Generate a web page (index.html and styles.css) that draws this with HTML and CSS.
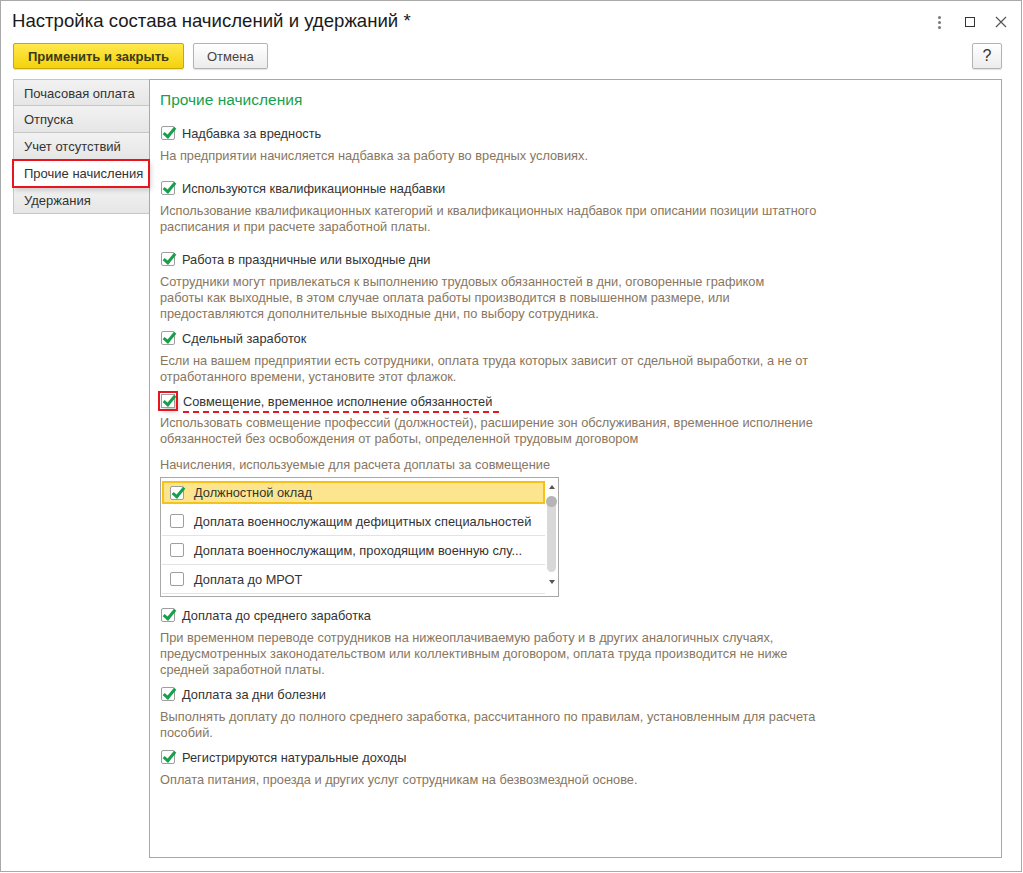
FILE: index.html
```html
<!DOCTYPE html>
<html lang="ru">
<head>
    <meta charset="UTF-8">
    <title>Настройка состава начислений и удержаний</title>
    <link rel="stylesheet" href="styles.css">
</head>
<body>
    <div class="window">
        <div class="titlebar">
            <h1>Настройка состава начислений и удержаний *</h1>
            <div class="win-controls">
                <span class="dots"><i></i><i></i><i></i></span>
                <span class="maximize"></span>
                <svg class="close" width="12" height="12" viewBox="0 0 12 12"><path d="M1 1 L11 11 M11 1 L1 11" stroke="#555" stroke-width="1.2"/></svg>
            </div>
        </div>

        <div class="commandbar">
            <button class="btn btn-primary">Применить и закрыть</button>
            <button class="btn">Отмена</button>
            <button class="btn btn-help">?</button>
        </div>

        <div class="main">
            <div class="tabs">
                <div class="tab">Почасовая оплата</div>
                <div class="tab">Отпуска</div>
                <div class="tab">Учет отсутствий</div>
                <div class="tab active">Прочие начисления</div>
                <div class="tab">Удержания</div>
            </div>

            <div class="panel">
                <h2>Прочие начисления</h2>

                <div class="opt first">
                    <label class="check"><span class="cb on"></span>Надбавка за вредность</label>
                    <p class="hint">На предприятии начисляется надбавка за работу во вредных условиях.</p>
                </div>

                <div class="opt spaced">
                    <label class="check"><span class="cb on"></span>Используются квалификационные надбавки</label>
                    <p class="hint">Использование квалификационных категорий и квалификационных надбавок при описании позиции штатного<br>расписания и при расчете заработной платы.</p>
                </div>

                <div class="opt spaced">
                    <label class="check"><span class="cb on"></span>Работа в праздничные или выходные дни</label>
                    <p class="hint">Сотрудники могут привлекаться к выполнению трудовых обязанностей в дни, оговоренные графиком<br>работы как выходные, в этом случае оплата работы производится в повышенном размере, или<br>предоставляются дополнительные выходные дни, по выбору сотрудника.</p>
                </div>

                <div class="opt">
                    <label class="check"><span class="cb on"></span>Сдельный заработок</label>
                    <p class="hint">Если на вашем предприятии есть сотрудники, оплата труда которых зависит от сдельной выработки, а не от<br>отработанного времени, установите этот флажок.</p>
                </div>

                <div class="opt">
                    <label class="check"><span class="cb on marked"></span><span class="underlined">Совмещение, временное исполнение обязанностей</span></label>
                    <p class="hint tight">Использовать совмещение профессий (должностей), расширение зон обслуживания, временное исполнение<br>обязанностей без освобождения от работы, определенной трудовым договором</p>
                    <p class="hint list-title">Начисления, используемые для расчета доплаты за совмещение</p>
                    <div class="listbox">
                        <div class="rows">
                            <div class="row selected"><span class="cb on"></span>Должностной оклад</div>
                            <div class="row"><span class="cb"></span>Доплата военнослужащим дефицитных специальностей</div>
                            <div class="row"><span class="cb"></span>Доплата военнослужащим, проходящим военную слу...</div>
                            <div class="row"><span class="cb"></span>Доплата до МРОТ</div>
                        </div>
                        <div class="scrollbar">
                            <span class="arrow up"></span>
                            <span class="track"><span class="thumb"></span></span>
                            <span class="arrow down"></span>
                        </div>
                    </div>
                </div>

                <div class="opt after-list">
                    <label class="check"><span class="cb on"></span>Доплата до среднего заработка</label>
                    <p class="hint">При временном переводе сотрудников на нижеоплачиваемую работу и в других аналогичных случаях,<br>предусмотренных законодательством или коллективным договором, оплата труда производится не ниже<br>средней заработной платы.</p>
                </div>

                <div class="opt">
                    <label class="check"><span class="cb on"></span>Доплата за дни болезни</label>
                    <p class="hint">Выполнять доплату до полного среднего заработка, рассчитанного по правилам, установленным для расчета<br>пособий.</p>
                </div>

                <div class="opt">
                    <label class="check"><span class="cb on"></span>Регистрируются натуральные доходы</label>
                    <p class="hint">Оплата питания, проезда и других услуг сотрудникам на безвозмездной основе.</p>
                </div>
            </div>
        </div>
    </div>
</body>
</html>
```

FILE: styles.css
```css
body {
    margin: 0;
    background-color: #ffffff;
    font-family: 'Liberation Sans', Arial, sans-serif;
    color: #333333;
}

.window {
    width: 1022px;
    height: 872px;
    box-sizing: border-box;
    border: 1px solid #a9a9a9;
    display: flex;
    flex-direction: column;
}

.titlebar {
    height: 42px;
    display: flex;
    align-items: center;
    justify-content: space-between;
    padding: 0 14px 0 11px;
}

h1 {
    margin: 0;
    font-size: 18.6px;
    font-weight: normal;
    color: #1a1a1a;
    position: relative;
    top: -1px;
}

.win-controls {
    display: flex;
    align-items: center;
}

.dots {
    display: flex;
    flex-direction: column;
    gap: 2px;
    margin-right: 24px;
}

.dots i {
    width: 3px;
    height: 3px;
    border-radius: 50%;
    background-color: #777;
}

.maximize {
    width: 8px;
    height: 8px;
    border: 1px solid #333;
    margin-right: 20px;
}

.commandbar {
    display: flex;
    gap: 9px;
    padding: 0 19px 0 12px;
    height: 26px;
}

.btn {
    font-family: 'Liberation Sans', Arial, sans-serif;
    font-size: 13px;
    height: 26px;
    padding: 0 13px;
    border: 1px solid #b3b3b3;
    border-radius: 2px;
    background: linear-gradient(#ffffff, #ececec);
    color: #444;
    box-shadow: 0 1px 1px rgba(0,0,0,0.12);
}

.btn-primary {
    font-weight: bold;
    color: #3a3a1a;
    background: linear-gradient(#ffe94d, #f4d20c);
    border-color: #c9a800;
    width: 171px;
}

.btn-help {
    margin-left: auto;
    width: 30px;
    padding: 0;
    font-size: 16px;
    color: #333;
}

.main {
    display: flex;
    margin: 10px 19px 13px 12px;
    flex: 1;
}

.tabs {
    width: 136px;
    display: flex;
    flex-direction: column;
}

.tab {
    height: 27px;
    line-height: 24px;
    padding-top: 2px;
    box-sizing: border-box;
    padding-left: 10px;
    font-size: 13px;
    color: #333;
    background: linear-gradient(#f2f2f2, #e6e6e6);
    border: 1px solid #c6c6c6;
    border-right: none;
    border-top: none;
}

.tab:first-child {
    border-top: 1px solid #c6c6c6;
}

.tab.active {
    background: #ffffff;
    position: relative;
    z-index: 2;
    outline: 2px solid #e8141e;
    outline-offset: -1px;
    box-shadow: 2px 3px 5px rgba(0,0,0,0.18);
}

.panel {
    flex: 1;
    border: 1px solid #a8a8a8;
    padding: 0 10px;
    background: #ffffff;
}

h2 {
    margin: 10px 0 0;
    font-size: 15.5px;
    line-height: 20px;
    font-weight: normal;
    color: #17a04c;
}

.opt {
    margin-top: 7px;
}

.opt.first {
    margin-top: 14px;
}

.opt.spaced {
    margin-top: 15px;
}

.opt.after-list {
    margin-top: 9px;
}

.check {
    display: flex;
    align-items: center;
    height: 18px;
    font-size: 12.8px;
    color: #333;
    padding-left: 1px;
}

.cb {
    width: 14px;
    height: 14px;
    box-sizing: border-box;
    border: 1px solid #9e9e9e;
    border-radius: 2px;
    background: #ffffff;
    margin-right: 7px;
    position: relative;
    flex-shrink: 0;
}

.cb.on::after {
    content: "";
    position: absolute;
    left: 4px;
    top: -2px;
    width: 4px;
    height: 10px;
    border: solid #17a04c;
    border-width: 0 3px 3px 0;
    transform: rotate(40deg);
}

.cb.marked {
    border-radius: 0;
    outline: 2px solid #e8141e;
    outline-offset: 1px;
    box-shadow: 3px 4px 5px rgba(0,0,0,0.2);
    margin-right: 8px;
}

.underlined {
    position: relative;
}

.underlined::after {
    content: "";
    position: absolute;
    left: 0;
    right: -7px;
    bottom: -4px;
    border-bottom: 2px dashed #e8141e;
}

.hint {
    margin: 6px 0 0;
    font-size: 12.8px;
    line-height: 16px;
    color: #88765e;
}

.hint.tight {
    margin-top: 5px;
}

.list-title {
    margin-top: 10px;
}

.listbox {
    margin-top: 4px;
    width: 399px;
    height: 120px;
    box-sizing: border-box;
    border: 1px solid #a8a8a8;
    display: flex;
    padding: 3px 0 0 1px;
}

.rows {
    flex: 1;
}

.row {
    height: 29px;
    box-sizing: border-box;
    display: flex;
    align-items: center;
    padding-left: 8px;
    font-size: 12.8px;
    color: #333;
    border-bottom: 1px solid #e3e3e3;
    white-space: nowrap;
}

.row .cb {
    margin-right: 10px;
}

.row.selected {
    height: 23px;
    margin-bottom: 3px;
    background: #fde58f;
    border: 2px solid #f6c21a;
    padding-left: 6px;
}

.scrollbar {
    width: 13px;
    display: flex;
    flex-direction: column;
    align-items: center;
    padding-top: 4px;
}

.arrow {
    width: 0;
    height: 0;
    border-left: 3px solid transparent;
    border-right: 3px solid transparent;
}

.arrow.up {
    border-bottom: 4px solid #555;
    margin-bottom: 7px;
}

.arrow.down {
    border-top: 4px solid #555;
    margin-top: 8px;
}

.track {
    width: 9px;
    height: 76px;
    border-radius: 5px;
    background: #d9d9d9;
    position: relative;
}

.thumb {
    position: absolute;
    top: 0;
    left: -1px;
    width: 11px;
    height: 11px;
    border-radius: 50%;
    background: #b5b5b5;
}
```
